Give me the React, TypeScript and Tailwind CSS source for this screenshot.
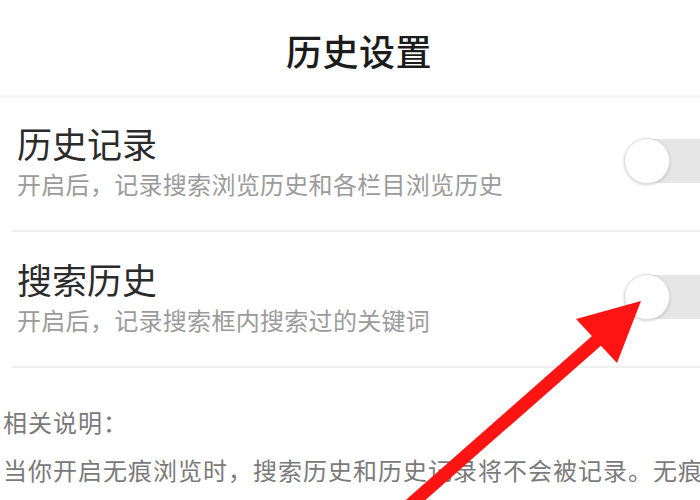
import React from 'react';

function Toggle() {
  return (
    <div className="shrink-0 mr-[-24px] flex items-center w-[100px] h-[44px] rounded-full bg-[#e6e6e6]">
      <div className="w-[46px] h-[46px] rounded-full bg-white border border-[#e0e0e0] shadow-[0_1px_3px_rgba(0,0,0,0.18)]" />
    </div>
  );
}

function SettingRow({ title, desc, top }: { title: string; desc: string; top: string }) {
  return (
    <div className={`flex items-center pl-[17px] pb-[30px] ${top}`}>
      <div className="flex-1 flex flex-col gap-[3px]">
        <span className="text-[35px] leading-[44px] text-[#2b2b2b]">{title}</span>
        <span className="text-[24px] leading-[32px] tracking-[0.3px] text-[#9b9b9b]">{desc}</span>
      </div>
      <Toggle />
    </div>
  );
}

export default function App() {
  return (
    <div
      className="relative w-[700px] h-[500px] overflow-hidden bg-white"
      style={{ fontFamily: '"Noto Sans CJK SC", "Noto Sans", sans-serif' }}
    >
      {/* header */}
      <div className="h-[95px] flex items-center justify-center pl-[18px] pt-[4px]">
        <h1 className="text-[36px] font-medium text-[#1c1c1c] tracking-[0.5px]">历史设置</h1>
      </div>
      <div className="h-[3px] bg-[#f7f7f7]" />

      <SettingRow title="历史记录" desc="开启后，记录搜索浏览历史和各栏目浏览历史" top="pt-[23px]" />
      <div className="ml-[12px] h-[2px] bg-[#efefef]" />
      <SettingRow title="搜索历史" desc="开启后，记录搜索框内搜索过的关键词" top="pt-[25px]" />
      <div className="ml-[12px] h-[2px] bg-[#efefef]" />

      {/* notes */}
      <div className="pl-[3px] pt-[38px] flex flex-col gap-[16px] text-[24px] leading-[32px] tracking-[1px] text-[#7a7a7a] whitespace-nowrap">
        <p>相关说明：</p>
        <p>当你开启无痕浏览时，搜索历史和历史记录将不会被记录。无痕</p>
        <p className="mt-[-2px]">浏览模式下产生的数据，将在退出后自动清除。</p>
      </div>

      {/* annotation arrow */}
      <svg className="absolute inset-0 pointer-events-none" width="700" height="500" viewBox="0 0 700 500">
        <line x1="402" y1="512" x2="602" y2="336" stroke="#ff1414" strokeWidth="13" />
        <polygon points="641,301 576,319 617,363" fill="#ff1414" />
      </svg>
    </div>
  );
}
